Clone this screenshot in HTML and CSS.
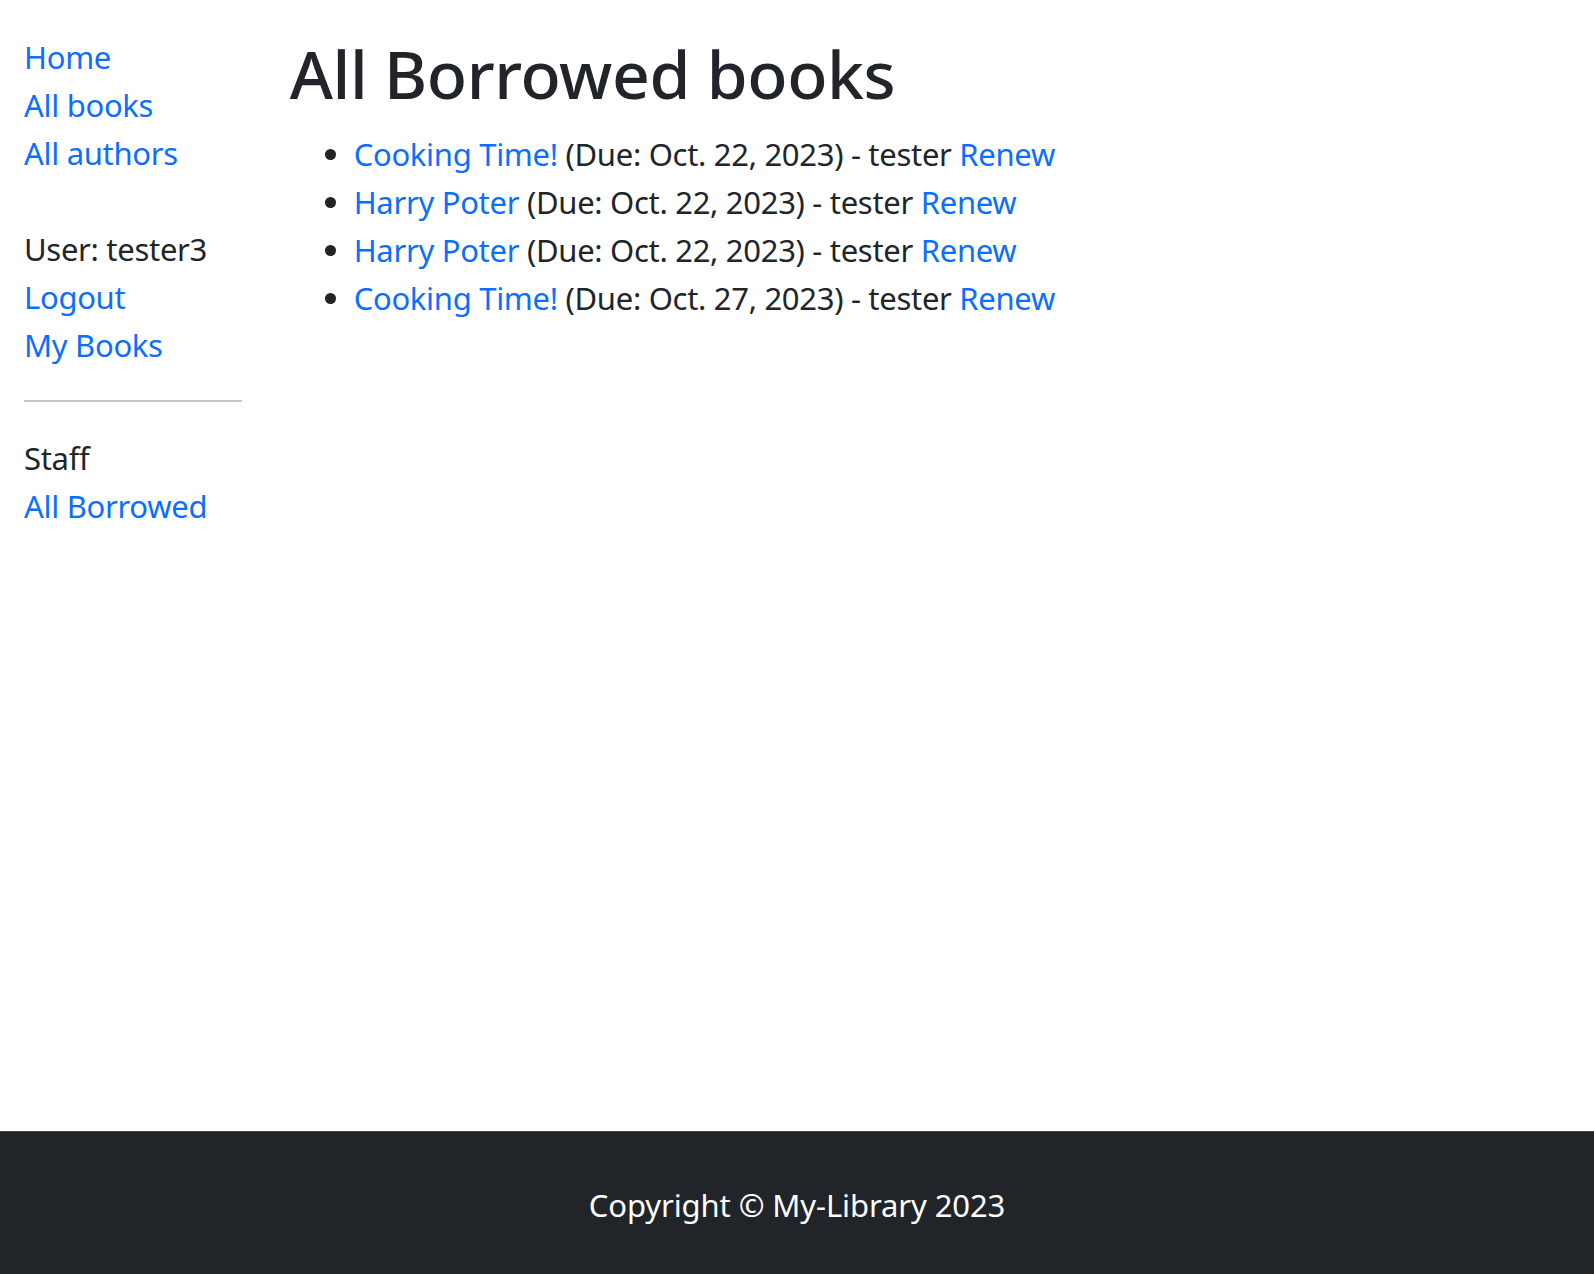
FILE: index.html
```html
<!DOCTYPE html>
<html lang="en">
<head>
<meta charset="utf-8">
<title>Local Library</title>
<link rel="stylesheet" href="styles.css">
</head>
<body>
<div class="page">
  <div class="content-wrap">
    <div class="row">
      <aside class="sidebar">
        <ul class="sidebar-nav">
          <li><a href="#">Home</a></li>
          <li><a href="#">All books</a></li>
          <li><a href="#">All authors</a></li>
          <li class="user">User: tester3</li>
          <li><a href="#">Logout</a></li>
          <li><a href="#">My Books</a></li>
        </ul>
        <hr class="divider">
        <ul class="sidebar-nav">
          <li>Staff</li>
          <li><a href="#">All Borrowed</a></li>
        </ul>
      </aside>
      <main class="main">
        <h1 class="title">All Borrowed books</h1>
        <ul class="loans">
          <li><a href="#">Cooking Time!</a> (Due: Oct. 22, 2023) - tester <a href="#">Renew</a></li>
          <li><a href="#">Harry Poter</a> (Due: Oct. 22, 2023) - tester <a href="#">Renew</a></li>
          <li><a href="#">Harry Poter</a> (Due: Oct. 22, 2023) - tester <a href="#">Renew</a></li>
          <li><a href="#">Cooking Time!</a> (Due: Oct. 27, 2023) - tester <a href="#">Renew</a></li>
        </ul>
      </main>
    </div>
  </div>
  <footer class="footer">Copyright © My-Library 2023</footer>
</div>
</body>
</html>
```

FILE: styles.css
```css
* { box-sizing: border-box; }
html, body { margin: 0; padding: 0; }
body {
  font-family: "Noto Sans", "Open Sans", sans-serif;
  font-size: 31px;
  letter-spacing: -0.3px;
  line-height: 48px;
  color: #212529;
  background: #fff;
}
a { color: #0d6efd; text-decoration: none; }
.page {
  min-height: 100vh;
  display: flex;
  flex-direction: column;
}
.content-wrap {
  flex: 1;
  padding-top: 33px;
}
.row {
  display: grid;
  grid-template-columns: 16.6667% 83.3333%;
}
.sidebar, .main { padding: 0 24px; }
.sidebar-nav {
  list-style: none;
  margin: 0;
  padding: 0;
}
.sidebar-nav .user { margin-top: 48px; }
.divider {
  margin: 31px 0 32px;
  border: 0;
  border-top: 2px solid #c8c9ca;
  height: 0;
}
.title {
  font-size: 66px;
  letter-spacing: -0.4px;
  font-weight: 500;
  line-height: 81.6px;
  margin: 0 0 15px;
}
.loans {
  margin: 0;
  padding-left: 64px;
}
.footer {
  background: #212529;
  border-top: 1px solid #45484c;
  color: #fff;
  text-align: center;
  letter-spacing: -0.1px;
  padding: 49px 0 45px;
}
```
